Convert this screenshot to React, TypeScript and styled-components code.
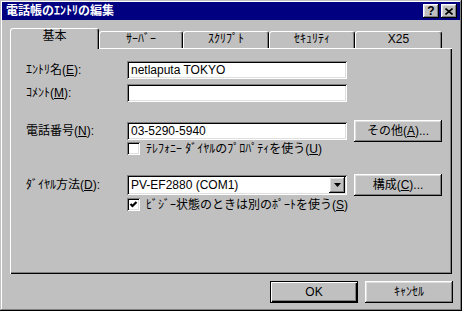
import React from 'react'
import styled, { createGlobalStyle } from 'styled-components'

const GlobalStyle = createGlobalStyle`
  html, body {
    margin: 0;
    padding: 0;
    background: #c0c0c0;
  }
  body {
    font-family: "Liberation Sans", "Noto Sans CJK JP", sans-serif;
    font-size: 12px;
    color: #000;
  }
`

const raisedBevel = `
  box-shadow: inset -1px -1px 0 #000, inset 1px 1px 0 #fff,
    inset -2px -2px 0 #808080, inset 2px 2px 0 #dfdfdf;
`
const sunkenBevel = `
  box-shadow: inset 1px 1px 0 #808080, inset -1px -1px 0 #fff,
    inset 2px 2px 0 #000, inset -2px -2px 0 #dfdfdf;
`

const Window = styled.div`
  width: 462px;
  height: 311px;
  box-sizing: border-box;
  padding: 2px;
  background: #c0c0c0;
  box-shadow: inset -1px -1px 0 #000, inset 1px 1px 0 #c0c0c0,
    inset -2px -2px 0 #808080, inset 2px 2px 0 #fff;
  display: flex;
  flex-direction: column;
`

const TitleBar = styled.div`
  height: 18px;
  background: #000080;
  color: #fff;
  display: flex;
  align-items: center;
  padding: 0 3px 0 4px;
  font-weight: bold;
  line-height: 14px;
`

const TitleText = styled.div`
  flex: 1;
`

const CaptionButton = styled.div`
  width: 16px;
  height: 14px;
  box-sizing: border-box;
  background: #c0c0c0;
  ${raisedBevel}
  display: flex;
  align-items: center;
  justify-content: center;
  color: #000;
  font-weight: bold;
  font-size: 12px;
  line-height: 12px;
  & + & {
    margin-left: 2px;
  }
`

const TabStrip = styled.div`
  margin: 8px 0 0 8px;
  height: 20px;
  display: flex;
  align-items: flex-end;
`

const Tab = styled.div<{ $w: number; $active?: boolean }>`
  width: ${(p) => p.$w}px;
  height: ${(p) => (p.$active ? 21 : 17)}px;
  margin-bottom: ${(p) => (p.$active ? -1 : 0)}px;
  position: relative;
  z-index: ${(p) => (p.$active ? 1 : 0)};
  box-sizing: border-box;
  background: #c0c0c0;
  border-top: 1px solid #fff;
  border-left: 1px solid #fff;
  border-right: 1px solid #000;
  border-radius: 3px 3px 0 0;
  box-shadow: inset -1px 0 0 #808080;
  display: flex;
  justify-content: center;
  line-height: 12px;
  padding-top: 1px;
`

const Panel = styled.div`
  margin: 0 8px;
  height: 226px;
  box-sizing: border-box;
  padding: 13px 0 0 16px;
  box-shadow: inset 1px 1px 0 #fff, inset -1px -1px 0 #000,
    inset -2px -2px 0 #808080;
  display: flex;
  flex-direction: column;
`

const Row = styled.div<{ $top: number; $h: number }>`
  margin-top: ${(p) => p.$top}px;
  height: ${(p) => p.$h}px;
  display: flex;
  align-items: center;
`

const Label = styled.div`
  width: 101px;
  flex: none;
  line-height: 14px;
`

const Field = styled.div<{ $h?: number }>`
  width: 220px;
  height: ${(p) => p.$h ?? 18}px;
  box-sizing: border-box;
  background: #fff;
  ${sunkenBevel}
  display: flex;
  align-items: center;
  padding: 0 2px 0 4px;
  line-height: 14px;
`

const FieldText = styled.div`
  flex: 1;
`

const DropButton = styled.div`
  width: 16px;
  height: 16px;
  box-sizing: border-box;
  background: #c0c0c0;
  ${raisedBevel}
  display: flex;
  align-items: center;
  justify-content: center;
`

const Button = styled.div<{ $default?: boolean }>`
  width: 88px;
  height: 22px;
  box-sizing: border-box;
  background: #c0c0c0;
  ${(p) =>
    p.$default
      ? `box-shadow: inset 0 0 0 1px #000, inset 2px 2px 0 #fff,
          inset -2px -2px 0 #000, inset -3px -3px 0 #808080;`
      : raisedBevel}
  display: flex;
  align-items: center;
  justify-content: center;
  line-height: 14px;
  flex: none;
`

const SideButton = styled(Button)`
  margin-left: 7px;
`

const CheckRow = styled.div<{ $top: number }>`
  margin-top: ${(p) => p.$top}px;
  margin-left: 101px;
  height: 13px;
  display: flex;
  align-items: center;
  line-height: 14px;
`

const CheckBox = styled.div`
  width: 13px;
  height: 13px;
  box-sizing: border-box;
  background: #fff;
  ${sunkenBevel}
  margin-right: 6px;
  flex: none;
  display: flex;
`

const Footer = styled.div`
  margin-top: 7px;
  padding-right: 7px;
  display: flex;
  justify-content: flex-end;
  gap: 7px;
`

const CheckMark = () => (
  <svg width="13" height="13" viewBox="0 0 13 13">
    <polyline points="3.5,6 5.5,8 9.5,4" fill="none" stroke="#000" strokeWidth="2.2" />
  </svg>
)

const tabs = [
  { label: '基本', w: 89 },
  { label: 'ｻｰﾊﾞｰ', w: 84 },
  { label: 'ｽｸﾘﾌﾟﾄ', w: 86 },
  { label: 'ｾｷｭﾘﾃｨ', w: 86 },
  { label: 'X25', w: 87 },
]

export default function App() {
  return (
    <>
      <GlobalStyle />
      <Window>
        <TitleBar>
          <TitleText>電話帳のｴﾝﾄﾘの編集</TitleText>
          <CaptionButton>?</CaptionButton>
          <CaptionButton>
            <svg width="8" height="7" viewBox="0 0 8 7">
              <path d="M0.5 0.5 L7.5 6.5 M7.5 0.5 L0.5 6.5" stroke="#000" strokeWidth="1.6" />
            </svg>
          </CaptionButton>
        </TitleBar>

        <TabStrip>
          {tabs.map((t, i) => (
            <Tab key={t.label} $w={t.w} $active={i === 0}>
              {t.label}
            </Tab>
          ))}
        </TabStrip>

        <Panel>
          <Row $top={0} $h={18}>
            <Label>
              ｴﾝﾄﾘ名(<u>E</u>):
            </Label>
            <Field>
              <FieldText>netlaputa TOKYO</FieldText>
            </Field>
          </Row>
          <Row $top={5} $h={18}>
            <Label>
              ｺﾒﾝﾄ(<u>M</u>):
            </Label>
            <Field />
          </Row>

          <Row $top={18} $h={22}>
            <Label>
              電話番号(<u>N</u>):
            </Label>
            <Field>
              <FieldText>03-5290-5940</FieldText>
            </Field>
            <SideButton>
              その他(<u>A</u>)...
            </SideButton>
          </Row>
          <CheckRow $top={0}>
            <CheckBox />
            ﾃﾚﾌｫﾆｰ ﾀﾞｲﾔﾙのﾌﾟﾛﾊﾟﾃｨを使う(<u>U</u>)
          </CheckRow>

          <Row $top={19} $h={22}>
            <Label>
              ﾀﾞｲﾔﾙ方法(<u>D</u>):
            </Label>
            <Field $h={20}>
              <FieldText>PV-EF2880 (COM1)</FieldText>
              <DropButton>
                <svg width="7" height="4" viewBox="0 0 7 4">
                  <path d="M0 0 H7 L3.5 4 Z" fill="#000" />
                </svg>
              </DropButton>
            </Field>
            <SideButton>
              構成(<u>C</u>)...
            </SideButton>
          </Row>
          <CheckRow $top={2}>
            <CheckBox>
              <CheckMark />
            </CheckBox>
            ﾋﾞｼﾞｰ状態のときは別のﾎﾟｰﾄを使う(<u>S</u>)
          </CheckRow>
        </Panel>

        <Footer>
          <Button $default>OK</Button>
          <Button>ｷｬﾝｾﾙ</Button>
        </Footer>
      </Window>
    </>
  )
}
